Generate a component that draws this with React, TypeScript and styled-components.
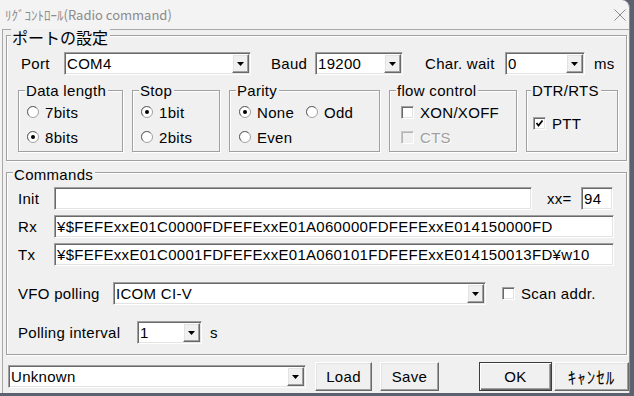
import React from "react";
import styled, { createGlobalStyle, css } from "styled-components";

const GlobalStyle = createGlobalStyle`
  html, body {
    margin: 0;
    padding: 0;
  }
  body {
    background: #5c6170;
    font-family: "Liberation Sans", "Noto Sans CJK JP", sans-serif;
    font-size: 15px;
    letter-spacing: 0.3px;
    color: #000;
  }
  * {
    box-sizing: border-box;
  }
`;

/* classic 3d frames */
const sunken = css`
  border: 1px solid;
  border-color: #a0a0a0 #fff #fff #a0a0a0;
  box-shadow: inset 1px 1px 0 #696969, inset -1px -1px 0 #e3e3e3;
  padding: 1px;
  background: #fff;
`;

const raised = css`
  border: 1px solid;
  border-color: #fff #696969 #696969 #fff;
  box-shadow: inset -1px -1px 0 #a0a0a0, inset 1px 1px 0 #e3e3e3;
  background: #f0f0f0;
`;

const Window = styled.div`
  width: 630px;
  height: 393px;
  background: #f3f3f3;
  border-right: 1px solid #8d8d8d;
  border-top-right-radius: 8px;
  display: flex;
  flex-direction: column;
  overflow: hidden;
`;

const TitleBar = styled.div`
  flex: none;
  height: 29px;
  display: flex;
  align-items: center;
  justify-content: space-between;
  padding: 0 3px 0 5px;
  font: 13px "Noto Sans CJK JP", sans-serif;
  letter-spacing: 0;
  color: #8c8c8c;
`;

const Client = styled.div`
  flex: 1;
  margin-left: 2px;
  border-left: 1px solid #a8a8a8;
  border-top: 1px solid #a8a8a8;
  background: #f0f0f0;
  padding: 5px 2px 0 3px;
  display: flex;
  flex-direction: column;
`;

const Group = styled.div<{ $pl: number; $pr?: number; $pb: number; $w?: number; $h?: number; $mt?: number }>`
  flex: none;
  display: flex;
  flex-direction: column;
  border: 1px solid #a0a0a0;
  box-shadow: inset 1px 1px 0 #fff, 1px 1px 0 #fff;
  padding: 0 ${(p) => p.$pr ?? 0}px ${(p) => p.$pb}px ${(p) => p.$pl}px;
  margin-top: ${(p) => p.$mt ?? 0}px;
  ${(p) => p.$w && `width: ${p.$w}px;`}
  ${(p) => p.$h && `height: ${p.$h}px;`}
`;

const Legend = styled.div<{ $ml: number; $mt: number; $cjk?: boolean }>`
  align-self: flex-start;
  margin: ${(p) => p.$mt}px 0 0 ${(p) => p.$ml}px;
  padding: 0 2px 0 1px;
  background: #f0f0f0;
  line-height: 14px;
  ${(p) => p.$cjk && `font: 16px "Noto Sans CJK JP", sans-serif; line-height: 16px; letter-spacing: 0;`}
  white-space: nowrap;
`;

const Row = styled.div<{ $mt?: number; $ml?: number; $h?: number }>`
  display: flex;
  align-items: center;
  height: ${(p) => p.$h ?? 23}px;
  margin-top: ${(p) => p.$mt ?? 0}px;
  margin-left: ${(p) => p.$ml ?? 0}px;
  flex: none;
`;

const Label = styled.span<{ $w?: number; $ml?: number }>`
  flex: none;
  white-space: nowrap;
  ${(p) => p.$w && `width: ${p.$w}px;`}
  margin-left: ${(p) => p.$ml ?? 0}px;
`;

const Edit = styled.div<{ $w?: number }>`
  ${sunken}
  height: 23px;
  ${(p) => (p.$w ? `width: ${p.$w}px; flex: none;` : `flex: 1;`)}
  padding: 1px 2px;
  line-height: 19px;
  white-space: nowrap;
  overflow: hidden;
`;

const ComboBox = styled.div<{ $w: number }>`
  ${sunken}
  flex: none;
  width: ${(p) => p.$w}px;
  height: 23px;
  display: flex;
`;

const ComboValue = styled.div`
  flex: 1;
  padding-left: 1px;
  line-height: 19px;
  white-space: nowrap;
  overflow: hidden;
`;

const DropButton = styled.div`
  ${raised}
  flex: none;
  width: 17px;
  height: 19px;
  display: flex;
  align-items: center;
  justify-content: center;
`;

const SubGroups = styled.div`
  display: flex;
  gap: 9px;
  margin-top: 15px;
`;

const Options = styled.div<{ $cols?: string; $mt: number }>`
  display: grid;
  grid-template-columns: ${(p) => p.$cols ?? "auto"};
  justify-content: start;
  row-gap: 5px;
  margin-top: ${(p) => p.$mt}px;
`;

const Option = styled.label<{ $disabled?: boolean }>`
  display: flex;
  align-items: center;
  gap: 6px;
  height: 20px;
  white-space: nowrap;
  ${(p) => p.$disabled && `color: #a0a0a0; text-shadow: 1px 1px 0 #fff;`}
`;

const Box = styled.span<{ $disabled?: boolean }>`
  ${sunken}
  flex: none;
  width: 13px;
  height: 13px;
  padding: 0;
  display: flex;
  align-items: center;
  justify-content: center;
  ${(p) => p.$disabled && `background: #f0f0f0; border-color: #c8c8c8 #fff #fff #c8c8c8; box-shadow: inset 1px 1px 0 #b4b4b4;`}
`;

const Button = styled.div<{ $w: number; $ml: number; $default?: boolean }>`
  ${raised}
  flex: none;
  width: ${(p) => p.$w}px;
  height: 29px;
  margin-left: ${(p) => p.$ml}px;
  display: flex;
  align-items: center;
  justify-content: center;
  ${(p) =>
    p.$default &&
    css`
      border: 1px solid #3c3c3c;
      box-shadow: inset 1px 1px 0 #fff, inset -1px -1px 0 #696969, inset -2px -2px 0 #a0a0a0;
    `}
`;

const Narrow = styled.span`
  font: 17px "Noto Sans CJK JP", sans-serif;
  letter-spacing: 1px;
  line-height: 20px;
`;

const Arrow = () => (
  <svg width="7" height="4" viewBox="0 0 7 4">
    <polygon points="0,0 7,0 3.5,4" fill="#000" />
  </svg>
);

const Combo = ({ w, value }: { w: number; value: string }) => (
  <ComboBox $w={w}>
    <ComboValue>{value}</ComboValue>
    <DropButton>
      <Arrow />
    </DropButton>
  </ComboBox>
);

const Radio = ({ checked, label }: { checked?: boolean; label: string }) => (
  <Option>
    <svg width="12" height="12" viewBox="0 0 12 12">
      <circle cx="6" cy="6" r="5.5" fill="#fff" stroke="#a0a0a0" />
      <path d="M2 9.5 A5 5 0 0 1 9.5 2" fill="none" stroke="#696969" />
      {checked && <circle cx="6" cy="6" r="2" fill="#000" />}
    </svg>
    {label}
  </Option>
);

const Check = ({ checked, disabled, label }: { checked?: boolean; disabled?: boolean; label: string }) => (
  <Option $disabled={disabled}>
    <Box $disabled={disabled}>
      {checked && (
        <svg width="9" height="9" viewBox="0 0 9 9">
          <polyline points="1.5,4 3.5,6.5 7.5,1.5" fill="none" stroke="#000" strokeWidth="1.8" />
        </svg>
      )}
    </Box>
    {label}
  </Option>
);

export default function App() {
  return (
    <>
      <GlobalStyle />
      <Window>
        <TitleBar>
          <span>ﾘｸﾞｺﾝﾄﾛｰﾙ(Radio command)</span>
          <svg width="12" height="12" viewBox="0 0 12 12">
            <path d="M0.5 0.5 L11.5 11.5 M11.5 0.5 L0.5 11.5" stroke="#8c8c8c" strokeWidth="1" />
          </svg>
        </TitleBar>
        <Client>
          <Group $pl={11} $pb={8}>
            <Legend $cjk $ml={-7} $mt={-7}>
              ポートの設定
            </Legend>
            <Row $mt={7} $ml={3}>
              <Label $w={43}>Port</Label>
              <Combo w={187} value="COM4" />
              <Label $ml={20} $w={44}>
                Baud
              </Label>
              <Combo w={88} value="19200" />
              <Label $ml={22} $w={80}>
                Char. wait
              </Label>
              <Combo w={80} value="0" />
              <Label $ml={9}>ms</Label>
            </Row>
            <SubGroups>
              <Group $w={105} $h={62} $pl={8} $pb={0}>
                <Legend $ml={-2} $mt={-7}>
                  Data length
                </Legend>
                <Options $mt={4}>
                  <Radio label="7bits" />
                  <Radio label="8bits" checked />
                </Options>
              </Group>
              <Group $w={88} $h={62} $pl={8} $pb={0}>
                <Legend $ml={-2} $mt={-7}>
                  Stop
                </Legend>
                <Options $mt={4}>
                  <Radio label="1bit" checked />
                  <Radio label="2bits" />
                </Options>
              </Group>
              <Group $w={151} $h={62} $pl={9} $pb={0}>
                <Legend $ml={-3} $mt={-7}>
                  Parity
                </Legend>
                <Options $cols="67px auto" $mt={4}>
                  <Radio label="None" checked />
                  <Radio label="Odd" />
                  <Radio label="Even" />
                </Options>
              </Group>
              <Group $w={128} $h={62} $pl={11} $pb={0}>
                <Legend $ml={-5} $mt={-7}>
                  flow control
                </Legend>
                <Options $mt={4}>
                  <Check label="XON/XOFF" />
                  <Check label="CTS" disabled />
                </Options>
              </Group>
              <Group $w={92} $h={62} $pl={6} $pb={0}>
                <Legend $ml={-2} $mt={-7}>
                  DTR/RTS
                </Legend>
                <Options $mt={15}>
                  <Check label="PTT" checked />
                </Options>
              </Group>
            </SubGroups>
          </Group>

          <Group $pl={11} $pr={12} $pb={10} $mt={11}>
            <Legend $ml={-5} $mt={-5}>
              Commands
            </Legend>
            <Row $mt={5}>
              <Label $w={36}>Init</Label>
              <Edit $w={478} />
              <Label $ml={15} $w={34}>
                xx=
              </Label>
              <Edit $w={32}>94</Edit>
            </Row>
            <Row $mt={5}>
              <Label $w={36}>Rx</Label>
              <Edit>¥$FEFExxE01C0000FDFEFExxE01A060000FDFEFExxE014150000FD</Edit>
            </Row>
            <Row $mt={5}>
              <Label $w={36}>Tx</Label>
              <Edit>¥$FEFExxE01C0001FDFEFExxE01A060101FDFEFExxE014150013FD¥w10</Edit>
            </Row>
            <Row $mt={16}>
              <Label $w={95}>VFO polling</Label>
              <Combo w={373} value="ICOM CI-V" />
              <Label $ml={16}>
                <Check label="Scan addr." />
              </Label>
            </Row>
            <Row $mt={16}>
              <Label $w={119}>Polling interval</Label>
              <Combo w={65} value="1" />
              <Label $ml={8}>s</Label>
            </Row>
          </Group>

          <Row $mt={7} $ml={2} $h={29}>
            <Combo w={298} value="Unknown" />
            <Button $w={57} $ml={9}>
              Load
            </Button>
            <Button $w={59} $ml={8}>
              Save
            </Button>
            <Button $w={73} $ml={40} $default>
              OK
            </Button>
            <Button $w={75} $ml={2}>
              <Narrow>ｷｬﾝｾﾙ</Narrow>
            </Button>
          </Row>
        </Client>
      </Window>
    </>
  );
}
